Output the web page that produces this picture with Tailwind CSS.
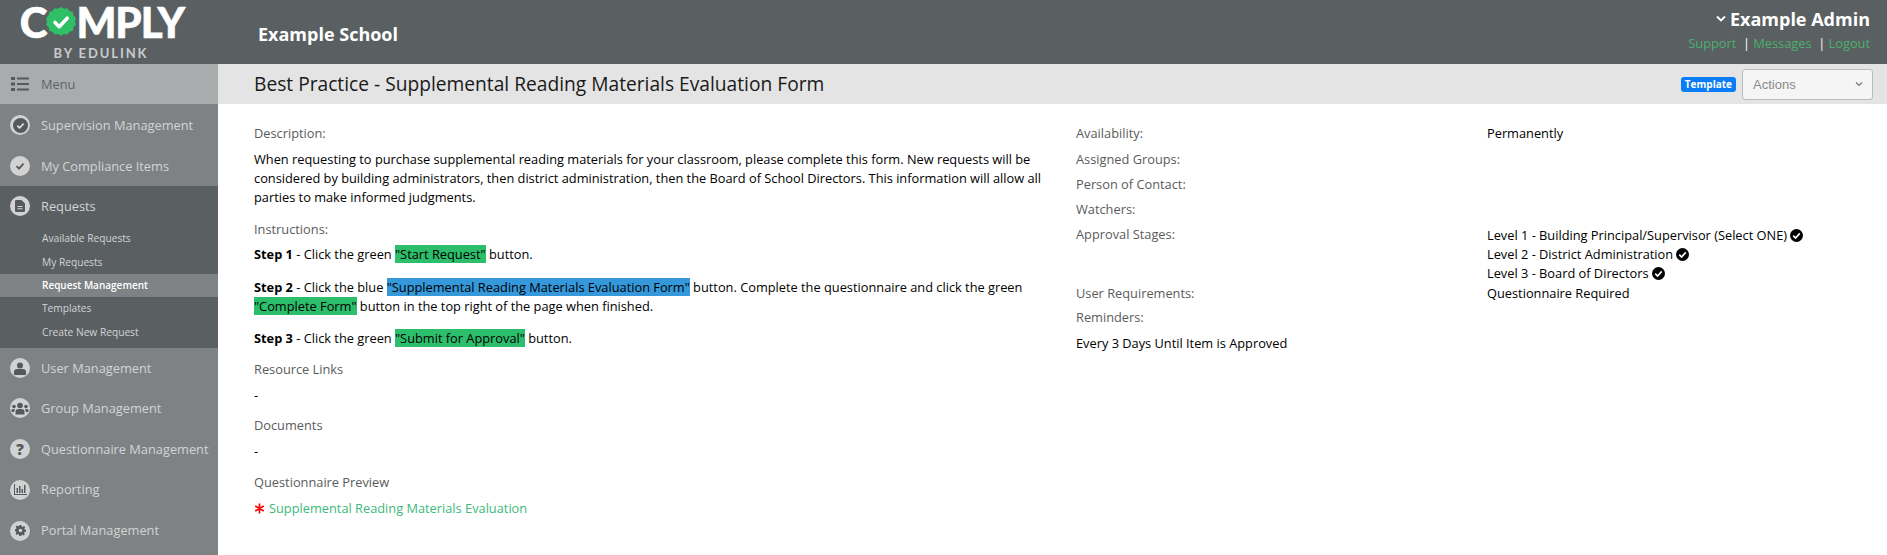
<!DOCTYPE html>
<html lang="en">
<head>
  <meta charset="UTF-8">
  <title>Comply - Best Practice</title>
  <script src="https://cdn.jsdelivr.net/npm/@tailwindcss/browser@4"></script>
</head>
<body class="font-['Open_Sans',sans-serif] text-[12.8px] leading-[19px] text-black bg-white overflow-hidden">
  <div class="h-[555px] flex flex-col">
    <!-- Header -->
    <header class="h-[64px] shrink-0 bg-[#5a5f62] flex text-white">
      <div class="w-[218px] shrink-0 flex flex-col items-center">
        <div class="flex items-center h-[44px] font-['Lato',sans-serif] font-black text-[42px] leading-[44px] tracking-[-1px] [-webkit-text-stroke:0.6px_white] ml-[-14px]">
          <span>C</span>
          <svg class="w-[32px] h-[32px] mx-[-1px]" viewBox="0 0 32 32">
            <path fill="#2fbf67" d="M16 1l3 1.800 3.500-.6 2 2.900 3.400 1 .5 3.500 2.600 2.400-1 3.400 1 3.400-2.600 2.400-.5 3.500-3.400 1-2 2.900-3.500-.6-3 1.800-3-1.800-3.500.6-2-2.900-3.400-1-.5-3.500-2.600-2.400 1-3.400-1-3.400 2.600-2.400.5-3.500 3.400-1 2-2.900 3.500.6z"/>
            <path fill="none" stroke="#fff" stroke-width="3.600" stroke-linecap="round" stroke-linejoin="round" d="M10 16.500l4.200 4.200 8-8.500"/>
          </svg>
          <span>MPLY</span>
        </div>
        <div class="font-['Lato',sans-serif] font-bold text-[13px] leading-[16px] tracking-[1.9px] text-[#c9cbcc] mt-[1px] ml-[-16px]">BY EDULINK</div>
      </div>
      <div class="w-[40px] shrink-0"></div>
      <div class="flex-1 pt-[23px] text-[18px] leading-[22px] font-bold">Example School</div>
      <div class="flex flex-col items-end pr-[17px] pt-[8px]">
        <div class="flex items-center text-[18px] leading-[22px] font-bold">
          <svg class="w-[10px] h-[8px] mr-[4px]" viewBox="0 0 10 8"><path d="M1 1.500l4 4 4-4" fill="none" stroke="#fff" stroke-width="1.800"/></svg>
          Example Admin
        </div>
        <div class="text-[12.8px] leading-[18px] mt-[4px] text-[#4caf6e] whitespace-pre">Support  <span class="text-white">|</span> Messages  <span class="text-white">|</span> Logout</div>
      </div>
    </header>

    <div class="flex-1 flex min-h-0">
      <!-- Sidebar -->
      <aside class="w-[218px] shrink-0 bg-[#7e8284] text-[12.8px] text-[#d2d4d5]">
        <div class="h-[40px] bg-[#a8acad] flex items-center pl-[11px] text-[#5f6467]">
          <svg class="w-[18px] h-[14px] mr-[12px]" viewBox="0 0 18 14" fill="#55595c"><rect x="0" y="0" width="4" height="3"/><rect x="0" y="5.500" width="4" height="3"/><rect x="0" y="11" width="4" height="3"/><rect x="6" y="0.500" width="12" height="2"/><rect x="6" y="6" width="12" height="2"/><rect x="6" y="11.500" width="12" height="2"/></svg>
          Menu
        </div>
        <div class="h-[41px] flex items-center pl-[10px] pt-[1px]">
          <span class="w-[20px] h-[20px] rounded-full bg-[#d2d2d2] flex items-center justify-center mr-[11px]"><span class="w-[15px] h-[15px] rounded-full bg-[#55595c] flex items-center justify-center"><svg class="w-[9px] h-[9px]" viewBox="0 0 10 10"><path d="M1.500 5.200l2.500 2.500 4.500-5" fill="none" stroke="#e8e8e8" stroke-width="1.800"/></svg></span></span>
          Supervision Management
        </div>
        <div class="h-[41px] flex items-center pl-[10px] pt-[1px]">
          <span class="w-[20px] h-[20px] rounded-full bg-[#d2d2d2] flex items-center justify-center mr-[11px]"><svg class="w-[10px] h-[10px]" viewBox="0 0 10 10"><path d="M1.500 5.200l2.500 2.500 4.500-5" fill="none" stroke="#55595c" stroke-width="1.800"/></svg></span>
          My Compliance Items
        </div>
        <div class="h-[162px] bg-[#5a5f62]">
          <div class="h-[41px] flex items-center pl-[10px] pb-[1px]">
            <span class="w-[20px] h-[20px] rounded-full bg-[#d2d2d2] flex items-center justify-center mr-[11px]"><svg class="w-[10px] h-[12px]" viewBox="0 0 10 12"><path fill="#55595c" fill-rule="evenodd" d="M1 0h5.500L10 3.500V11a1 1 0 0 1-1 1H1a1 1 0 0 1-1-1V1a1 1 0 0 1 1-1zM2.500 6v1h5V6zm0 2.200v1h5v-1z"/></svg></span>
            Requests
          </div>
          <div class="text-[10.2px] text-[#d2d4d5]">
            <div class="h-[23.500px] flex items-center pl-[42px]">Available Requests</div>
            <div class="h-[23.500px] flex items-center pl-[42px]">My Requests</div>
            <div class="h-[23px] flex items-center pl-[42px] bg-[#7e8284] text-white font-semibold text-[10px]">Request Management</div>
            <div class="h-[23.500px] flex items-center pl-[42px]">Templates</div>
            <div class="h-[23.500px] flex items-center pl-[42px]">Create New Request</div>
          </div>
        </div>
        <div class="h-[40px] flex items-center pl-[10px]">
          <span class="w-[20px] h-[20px] rounded-full bg-[#d2d2d2] overflow-hidden flex items-center justify-center mr-[11px]"><svg class="w-[12px] h-[13px]" viewBox="0 0 12 13" fill="#55595c"><circle cx="6" cy="3.500" r="3"/><path d="M0 13V10a3 3 0 0 1 3-3h6a3 3 0 0 1 3 3v3z"/></svg></span>
          User Management
        </div>
        <div class="h-[40.800px] flex items-center pl-[10px]">
          <span class="w-[20px] h-[20px] rounded-full bg-[#d2d2d2] flex items-center justify-center mr-[11px]"><svg class="w-[18px] h-[13px]" viewBox="0 0 18 13" fill="#55595c"><circle cx="9" cy="3.500" r="2.800"/><circle cx="3" cy="4.500" r="1.800"/><circle cx="15" cy="4.500" r="1.800"/><path d="M4.500 12.500V10a3 3 0 0 1 3-3h3a3 3 0 0 1 3 3v2.500z"/><path d="M0.500 10V8.500a1.500 1.500 0 0 1 1.500-1.500h2L3 10zM17.500 10V8.500A1.500 1.500 0 0 0 16 7h-2l1 3z"/></svg></span>
          Group Management
        </div>
        <div class="h-[40.800px] flex items-center pl-[10px]">
          <span class="w-[20px] h-[20px] rounded-full bg-[#d2d2d2] flex items-center justify-center mr-[11px] text-[#55595c] font-extrabold text-[15px] leading-[20px]">?</span>
          Questionnaire Management
        </div>
        <div class="h-[40.800px] flex items-center pl-[10px]">
          <span class="w-[20px] h-[20px] rounded-full bg-[#d2d2d2] flex items-center justify-center mr-[11px]"><svg class="w-[13px] h-[11px]" viewBox="0 0 13 11" fill="#55595c"><rect x="0" y="0" width="1" height="11"/><rect x="0" y="10" width="13" height="1"/><rect x="2.500" y="4" width="1.500" height="5"/><rect x="5" y="2" width="1.500" height="7"/><rect x="7.500" y="5" width="1.500" height="4"/><rect x="10" y="1" width="1.500" height="8"/></svg></span>
          Reporting
        </div>
        <div class="h-[40.800px] flex items-center pl-[10px]">
          <span class="w-[20px] h-[20px] rounded-full bg-[#d2d2d2] flex items-center justify-center mr-[11px]"><svg class="w-[11px] h-[11px]" viewBox="0 0 24 24"><path fill="#55595c" fill-rule="evenodd" d="M10 0h4l.7 3.300 2 .8L19.500 2.300l2.800 2.800-1.800 2.800.8 2L24 10.600v4l-3.300.7-.8 2 1.800 2.800-2.800 2.800-2.800-1.800-2 .8L13.400 24h-4l-.7-3.300-2-.8-2.800 1.800-2.800-2.800 1.800-2.800-.8-2L-1 13.400v-4l3.300-.7.8-2-1.800-2.800 2.800-2.800 2.800 1.800 2-.8zM12 8a4 4 0 1 0 0 8 4 4 0 0 0 0-8z"/></svg></span>
          Portal Management
        </div>
      </aside>

      <!-- Main -->
      <main class="flex-1 min-w-0">
        <div class="h-[40px] bg-[#e4e4e4] flex items-center pl-[36px] pr-[14px]">
          <h1 class="flex-1 text-[19.2px] leading-[26px] text-[#1a1a1a]">Best Practice - Supplemental Reading Materials Evaluation Form</h1>
          <span class="bg-[#0a7cf5] text-white text-[10px] leading-[15px] font-bold rounded-[3px] px-[4px] mr-[6px]">Template</span>
          <div class="w-[131px] h-[31px] border border-[#bcbcbc] rounded-[3px] bg-[#f5f5f5] flex items-center justify-between pl-[10px] pr-[9px] font-['Liberation_Sans',sans-serif] text-[#8a8a8a] text-[13px]">
            Actions
            <svg class="w-[8px] h-[6px]" viewBox="0 0 8 6"><path d="M1 1.500l3 3 3-3" fill="none" stroke="#777" stroke-width="1.200"/></svg>
          </div>
        </div>

        <div class="flex pl-[36px] pt-[20px]">
          <!-- Left column -->
          <div class="w-[822px] shrink-0 pr-[24px]">
            <div class="text-[#5b5b5b]">Description:</div>
            <p class="mt-[7px]">When requesting to purchase supplemental reading materials for your classroom, please complete this form. New requests will be considered by building administrators, then district administration, then the Board of School Directors. This information will allow all parties to make informed judgments.</p>
            <div class="text-[#5b5b5b] mt-[13px]">Instructions:</div>
            <p class="mt-[6px]"><b>Step 1</b> - Click the green <span class="bg-[#2dbe6c]">"Start Request"</span> button.</p>
            <p class="mt-[14px]"><b>Step 2</b> - Click the blue <span class="bg-[#3498db]">"Supplemental Reading Materials Evaluation Form"</span> button. Complete the questionnaire and click the green <span class="bg-[#2dbe6c]">"Complete Form"</span> button in the top right of the page when finished.</p>
            <p class="mt-[13px]"><b>Step 3</b> - Click the green <span class="bg-[#2dbe6c]">"Submit for Approval"</span> button.</p>
            <div class="text-[#5b5b5b] mt-[12px]">Resource Links</div>
            <div class="mt-[7px]">-</div>
            <div class="text-[#5b5b5b] mt-[11px]">Documents</div>
            <div class="mt-[7px]">-</div>
            <div class="text-[#5b5b5b] mt-[12px]">Questionnaire Preview</div>
            <div class="mt-[7px] flex items-center text-[#3dba7a]">
              <svg class="w-[11px] h-[11px] mr-[4px]" viewBox="0 0 11 11"><path d="M5.500 0.500v10M1.200 3l8.600 5M9.800 3l-8.600 5" stroke="#ff0000" stroke-width="1.700" fill="none"/></svg>
              Supplemental Reading Materials Evaluation
            </div>
          </div>

          <!-- Right column -->
          <div class="flex-1 grid grid-cols-[411px_1fr] content-start">
            <div class="text-[#5b5b5b] h-[26px]">Availability:</div><div>Permanently</div>
            <div class="text-[#5b5b5b] h-[25px]">Assigned Groups:</div><div></div>
            <div class="text-[#5b5b5b] h-[25px]">Person of Contact:</div><div></div>
            <div class="text-[#5b5b5b] h-[25px]">Watchers:</div><div></div>
            <div class="text-[#5b5b5b]">Approval Stages:</div>
            <div>
              <div class="flex items-center gap-[3px] h-[20px]">Level 1 - Building Principal/Supervisor (Select ONE) <svg class="w-[13px] h-[13px]" viewBox="0 0 14 14"><circle cx="7" cy="7" r="7" fill="#000"/><path d="M3.500 7.200l2.500 2.500 4.500-5" fill="none" stroke="#fff" stroke-width="1.800"/></svg></div>
              <div class="flex items-center gap-[3px] h-[19px]">Level 2 - District Administration <svg class="w-[13px] h-[13px]" viewBox="0 0 14 14"><circle cx="7" cy="7" r="7" fill="#000"/><path d="M3.500 7.200l2.500 2.500 4.500-5" fill="none" stroke="#fff" stroke-width="1.800"/></svg></div>
              <div class="flex items-center gap-[3px] h-[19px] mb-[1px]">Level 3 - Board of Directors <svg class="w-[13px] h-[13px]" viewBox="0 0 14 14"><circle cx="7" cy="7" r="7" fill="#000"/><path d="M3.500 7.200l2.500 2.500 4.500-5" fill="none" stroke="#fff" stroke-width="1.800"/></svg></div>
            </div>
            <div class="text-[#5b5b5b] h-[24px]">User Requirements:</div><div>Questionnaire Required</div>
            <div class="text-[#5b5b5b] h-[26px]">Reminders:</div><div></div>
            <div class="col-span-2">Every 3 Days Until Item is Approved</div>
          </div>
        </div>
      </main>
    </div>
  </div>
</body>
</html>
